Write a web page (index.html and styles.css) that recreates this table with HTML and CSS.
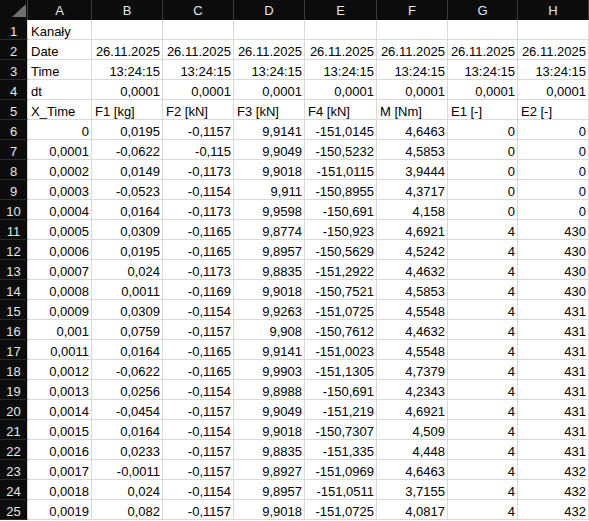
FILE: index.html
```html
<!DOCTYPE html>
<html lang="pl">
<head>
<meta charset="utf-8">
<title>Arkusz</title>
<link rel="stylesheet" href="styles.css">
</head>
<body>
<div class="sheet">
  <div class="corner"><svg width="14" height="13" viewBox="0 0 14 13"><polygon points="0,13 14,13 14,0" fill="#6f6f6f"/></svg></div>
  <div class="hd">A</div><div class="hd">B</div><div class="hd">C</div><div class="hd">D</div><div class="hd">E</div><div class="hd">F</div><div class="hd">G</div><div class="hd">H</div>

  <div class="rh">1</div><div class="c t">Kanały</div><div class="c"></div><div class="c"></div><div class="c"></div><div class="c"></div><div class="c"></div><div class="c"></div><div class="c"></div>
  <div class="rh">2</div><div class="c t">Date</div><div class="c n">26.11.2025</div><div class="c n">26.11.2025</div><div class="c n">26.11.2025</div><div class="c n">26.11.2025</div><div class="c n">26.11.2025</div><div class="c n">26.11.2025</div><div class="c n">26.11.2025</div>
  <div class="rh">3</div><div class="c t">Time</div><div class="c n">13:24:15</div><div class="c n">13:24:15</div><div class="c n">13:24:15</div><div class="c n">13:24:15</div><div class="c n">13:24:15</div><div class="c n">13:24:15</div><div class="c n">13:24:15</div>
  <div class="rh">4</div><div class="c t">dt</div><div class="c n">0,0001</div><div class="c n">0,0001</div><div class="c n">0,0001</div><div class="c n">0,0001</div><div class="c n">0,0001</div><div class="c n">0,0001</div><div class="c n">0,0001</div>
  <div class="rh">5</div><div class="c t">X_Time</div><div class="c t">F1 [kg]</div><div class="c t">F2 [kN]</div><div class="c t">F3 [kN]</div><div class="c t">F4 [kN]</div><div class="c t">M [Nm]</div><div class="c t">E1 [-]</div><div class="c t">E2 [-]</div>
  <div class="rh">6</div><div class="c n">0</div><div class="c n">0,0195</div><div class="c n">-0,1157</div><div class="c n">9,9141</div><div class="c n">-151,0145</div><div class="c n">4,6463</div><div class="c n">0</div><div class="c n">0</div>
  <div class="rh">7</div><div class="c n">0,0001</div><div class="c n">-0,0622</div><div class="c n">-0,115</div><div class="c n">9,9049</div><div class="c n">-150,5232</div><div class="c n">4,5853</div><div class="c n">0</div><div class="c n">0</div>
  <div class="rh">8</div><div class="c n">0,0002</div><div class="c n">0,0149</div><div class="c n">-0,1173</div><div class="c n">9,9018</div><div class="c n">-151,0115</div><div class="c n">3,9444</div><div class="c n">0</div><div class="c n">0</div>
  <div class="rh">9</div><div class="c n">0,0003</div><div class="c n">-0,0523</div><div class="c n">-0,1154</div><div class="c n">9,911</div><div class="c n">-150,8955</div><div class="c n">4,3717</div><div class="c n">0</div><div class="c n">0</div>
  <div class="rh">10</div><div class="c n">0,0004</div><div class="c n">0,0164</div><div class="c n">-0,1173</div><div class="c n">9,9598</div><div class="c n">-150,691</div><div class="c n">4,158</div><div class="c n">0</div><div class="c n">0</div>
  <div class="rh">11</div><div class="c n">0,0005</div><div class="c n">0,0309</div><div class="c n">-0,1165</div><div class="c n">9,8774</div><div class="c n">-150,923</div><div class="c n">4,6921</div><div class="c n">4</div><div class="c n">430</div>
  <div class="rh">12</div><div class="c n">0,0006</div><div class="c n">0,0195</div><div class="c n">-0,1165</div><div class="c n">9,8957</div><div class="c n">-150,5629</div><div class="c n">4,5242</div><div class="c n">4</div><div class="c n">430</div>
  <div class="rh">13</div><div class="c n">0,0007</div><div class="c n">0,024</div><div class="c n">-0,1173</div><div class="c n">9,8835</div><div class="c n">-151,2922</div><div class="c n">4,4632</div><div class="c n">4</div><div class="c n">430</div>
  <div class="rh">14</div><div class="c n">0,0008</div><div class="c n">0,0011</div><div class="c n">-0,1169</div><div class="c n">9,9018</div><div class="c n">-150,7521</div><div class="c n">4,5853</div><div class="c n">4</div><div class="c n">430</div>
  <div class="rh">15</div><div class="c n">0,0009</div><div class="c n">0,0309</div><div class="c n">-0,1154</div><div class="c n">9,9263</div><div class="c n">-151,0725</div><div class="c n">4,5548</div><div class="c n">4</div><div class="c n">431</div>
  <div class="rh">16</div><div class="c n">0,001</div><div class="c n">0,0759</div><div class="c n">-0,1157</div><div class="c n">9,908</div><div class="c n">-150,7612</div><div class="c n">4,4632</div><div class="c n">4</div><div class="c n">431</div>
  <div class="rh">17</div><div class="c n">0,0011</div><div class="c n">0,0164</div><div class="c n">-0,1165</div><div class="c n">9,9141</div><div class="c n">-151,0023</div><div class="c n">4,5548</div><div class="c n">4</div><div class="c n">431</div>
  <div class="rh">18</div><div class="c n">0,0012</div><div class="c n">-0,0622</div><div class="c n">-0,1165</div><div class="c n">9,9903</div><div class="c n">-151,1305</div><div class="c n">4,7379</div><div class="c n">4</div><div class="c n">431</div>
  <div class="rh">19</div><div class="c n">0,0013</div><div class="c n">0,0256</div><div class="c n">-0,1154</div><div class="c n">9,8988</div><div class="c n">-150,691</div><div class="c n">4,2343</div><div class="c n">4</div><div class="c n">431</div>
  <div class="rh">20</div><div class="c n">0,0014</div><div class="c n">-0,0454</div><div class="c n">-0,1157</div><div class="c n">9,9049</div><div class="c n">-151,219</div><div class="c n">4,6921</div><div class="c n">4</div><div class="c n">431</div>
  <div class="rh">21</div><div class="c n">0,0015</div><div class="c n">0,0164</div><div class="c n">-0,1154</div><div class="c n">9,9018</div><div class="c n">-150,7307</div><div class="c n">4,509</div><div class="c n">4</div><div class="c n">431</div>
  <div class="rh">22</div><div class="c n">0,0016</div><div class="c n">0,0233</div><div class="c n">-0,1157</div><div class="c n">9,8835</div><div class="c n">-151,335</div><div class="c n">4,448</div><div class="c n">4</div><div class="c n">431</div>
  <div class="rh">23</div><div class="c n">0,0017</div><div class="c n">-0,0011</div><div class="c n">-0,1157</div><div class="c n">9,8927</div><div class="c n">-151,0969</div><div class="c n">4,6463</div><div class="c n">4</div><div class="c n">432</div>
  <div class="rh">24</div><div class="c n">0,0018</div><div class="c n">0,024</div><div class="c n">-0,1154</div><div class="c n">9,8957</div><div class="c n">-151,0511</div><div class="c n">3,7155</div><div class="c n">4</div><div class="c n">432</div>
  <div class="rh">25</div><div class="c n">0,0019</div><div class="c n">0,082</div><div class="c n">-0,1157</div><div class="c n">9,9018</div><div class="c n">-151,0725</div><div class="c n">4,0817</div><div class="c n">4</div><div class="c n">432</div>
</div>
</body>
</html>
```
FILE: styles.css
```css
html, body {
  margin: 0;
  padding: 0;
  background: #ffffff;
  overflow: hidden;
}
.sheet {
  display: grid;
  grid-template-columns: 28px 64px 71px 71px 71px 72px 71px 70px 71px;
  grid-auto-rows: 20px;
  font-family: "Liberation Sans", Arial, sans-serif;
  font-size: 13px;
  color: #000;
}
.corner {
  background: #0c0c0c;
  box-sizing: border-box;
  border-right: 1px solid #3c3c3c;
  display: flex;
  justify-content: flex-end;
  align-items: flex-end;
  padding: 0 1px 3px 0;
}
.corner svg { display: block; }
.hd {
  background: #0c0c0c;
  color: #e6e6e6;
  box-sizing: border-box;
  border-right: 1px solid #3c3c3c;
  text-align: center;
  line-height: 15px;
  padding-top: 3px;
}
.rh {
  background: #0c0c0c;
  color: #e6e6e6;
  box-sizing: border-box;
  border-bottom: 1px solid #2c2c2c;
  border-right: 1px solid #d6d6d6;
  text-align: center;
  line-height: 15px;
  padding-top: 4px;
}
.c {
  box-sizing: border-box;
  border-right: 1px solid #dadada;
  border-bottom: 1px solid #dadada;
  line-height: 15px;
  padding-top: 4px;
  white-space: nowrap;
  overflow: hidden;
}
.t {
  text-align: left;
  padding-left: 3px;
}
.n {
  text-align: right;
  padding-right: 2px;
}
```
